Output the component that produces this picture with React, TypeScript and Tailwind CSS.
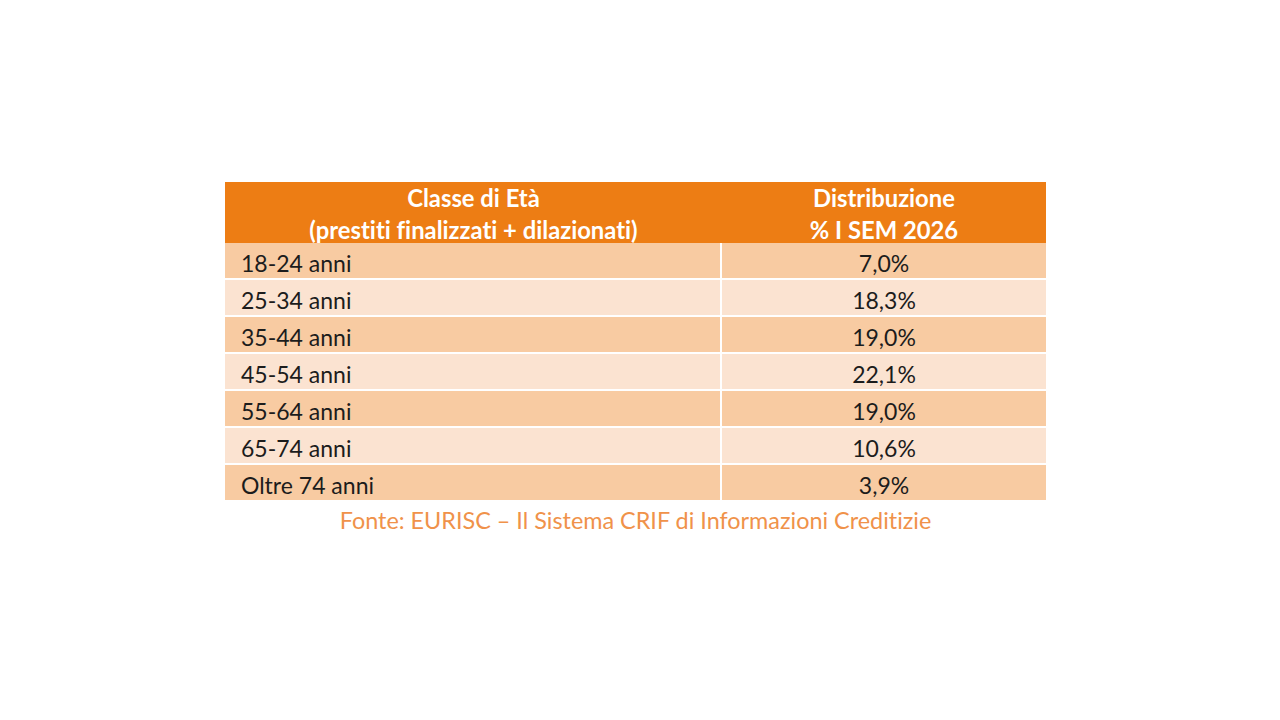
import React from 'react';

// ── Data ──────────────────────────────────────────────────────────────

const rows: { age: string; pct: string }[] = [
    { age: '18-24 anni', pct: '7,0%' },
    { age: '25-34 anni', pct: '18,3%' },
    { age: '35-44 anni', pct: '19,0%' },
    { age: '45-54 anni', pct: '22,1%' },
    { age: '55-64 anni', pct: '19,0%' },
    { age: '65-74 anni', pct: '10,6%' },
    { age: 'Oltre 74 anni', pct: '3,9%' },
];

// ── App ───────────────────────────────────────────────────────────────

export default function App() {
    return (
        <div
            className="w-[1280px] h-[720px] bg-white overflow-hidden [font-variant-ligatures:none]"
            style={{ fontFamily: 'Lato, "Noto Sans", sans-serif' }}
        >
            <div className="ml-[225px] pt-[182px] w-[821px]">
                {/* header */}
                <div className="flex h-[61px] bg-[#ED7D14] text-white font-bold text-[23.8px] leading-[32px]">
                    <div className="w-[497px] flex flex-col items-center justify-center pt-[3px]">
                        <span>Classe di Età</span>
                        <span>(prestiti finalizzati + dilazionati)</span>
                    </div>
                    <div className="flex-1 flex flex-col items-center justify-center pt-[3px]">
                        <span>Distribuzione</span>
                        <span>% I SEM 2026</span>
                    </div>
                </div>

                {/* body */}
                <div className="flex flex-col gap-[2px] text-[23px] text-[#1c1c1c]">
                    {rows.map((r, i) => (
                        <div
                            key={r.age}
                            className={`flex h-[35px] items-center ${i % 2 === 0 ? 'bg-[#F8CBA2]' : 'bg-[#FBE3D1]'}`}
                        >
                            <div className="w-[497px] h-full flex items-center pl-[16px] pt-[5px] border-r-2 border-white">
                                {r.age}
                            </div>
                            <div className="flex-1 text-center pt-[5px]">{r.pct}</div>
                        </div>
                    ))}
                </div>

                {/* source */}
                <p className="text-center text-[23.4px] text-[#F0924A] mt-[3px]">
                    Fonte: EURISC – Il Sistema CRIF di Informazioni Creditizie
                </p>
            </div>
        </div>
    );
}
